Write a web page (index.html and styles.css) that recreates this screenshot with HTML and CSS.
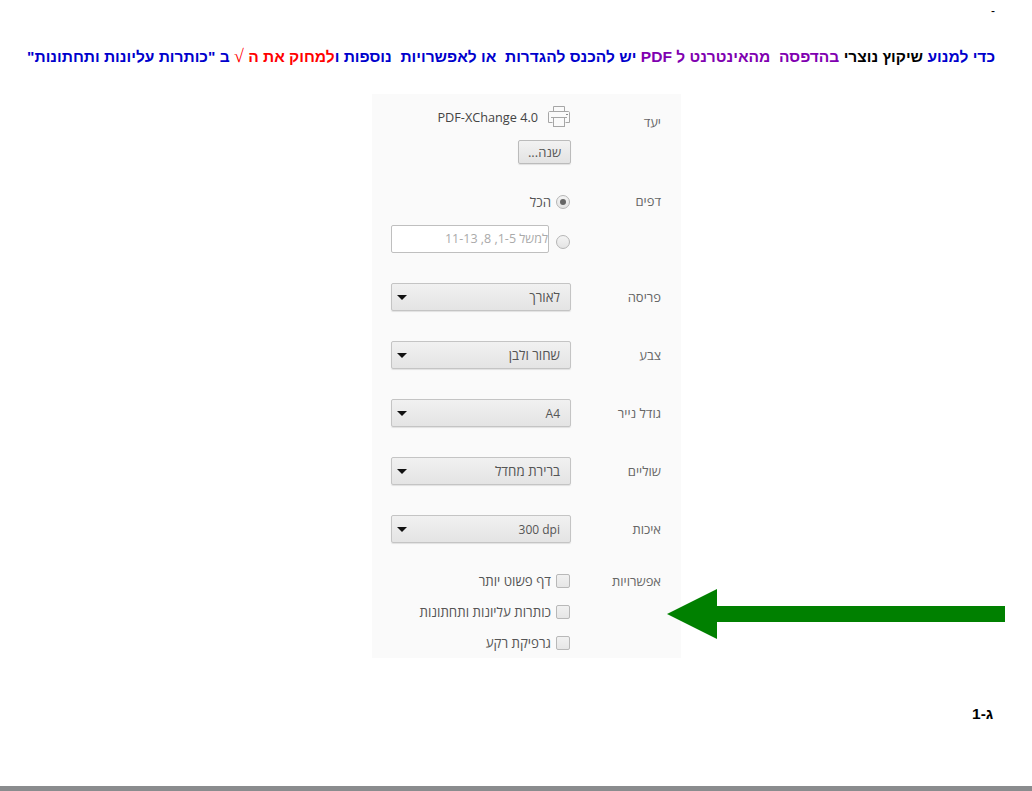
FILE: index.html
```html
<!DOCTYPE html>
<html lang="he" dir="rtl">
<head>
<meta charset="utf-8">
<title>הדפסה</title>
<link rel="stylesheet" href="styles.css">
</head>
<body>
<div class="page">
  <div class="dash">-</div>
  <h1 class="headline"><span class="blue">כדי למנוע</span> <span class="black">שיקוץ נוצרי</span> <span class="purple">בהדפסה&nbsp; מהאינטרנט ל PDF</span> <span class="blue">יש להכנס להגדרות&nbsp; או לאפשרויות&nbsp; נוספות ו</span><span class="red">למחוק את ה <span class="root">√</span></span> <span class="blue">ב "כותרות עליונות ותחתונות"</span></h1>
  <main class="panel">
    <section class="row row-dest">
      <div class="label label-dest">יעד</div>
      <div class="field">
        <div class="printer">
          <svg class="printer-icon" width="24" height="23" viewBox="0 0 24 23" fill="none" stroke="#a6a6a6" stroke-width="1">
            <path d="M6.5 6.5V1.5H17.5V6.5"/>
            <path d="M5.5 17.5H1.5V7.5C1.5 7 2 6.5 2.5 6.5H21.5C22 6.5 22.5 7 22.5 7.5V17.5H18.5"/>
            <rect x="6.5" y="12.5" width="11" height="9"/>
            <path d="M4 12.5H20"/>
            <path d="M19 9.5H21" stroke="#8a8a8a"/>
          </svg>
          <span class="latin">PDF-XChange 4.0</span>
        </div>
        <button class="btn" type="button">שנה...</button>
      </div>
    </section>
    <section class="row row-pages">
      <div class="label">דפים</div>
      <div class="field pages">
        <div class="opt"><span class="radio on"></span><span>הכל</span></div>
        <div class="opt opt-range"><span class="radio radio-low"></span><span class="range">למשל 1-5, 8, 11-13</span></div>
      </div>
    </section>
    <section class="row row-sel"><div class="label">פריסה</div><div class="field"><div class="select"><span>לאורך</span><span class="caret"></span></div></div></section>
    <section class="row row-sel"><div class="label">צבע</div><div class="field"><div class="select"><span>שחור ולבן</span><span class="caret"></span></div></div></section>
    <section class="row row-sel"><div class="label">גודל נייר</div><div class="field"><div class="select"><span class="latin">A4</span><span class="caret"></span></div></div></section>
    <section class="row row-sel"><div class="label">שוליים</div><div class="field"><div class="select"><span>ברירת מחדל</span><span class="caret"></span></div></div></section>
    <section class="row row-sel"><div class="label">איכות</div><div class="field"><div class="select"><span class="latin">300 dpi</span><span class="caret"></span></div></div></section>
    <section class="row row-opts">
      <div class="label">אפשרויות</div>
      <div class="field checks">
        <div class="opt"><span class="check"></span><span>דף פשוט יותר</span></div>
        <div class="opt"><span class="check"></span><span>כותרות עליונות ותחתונות</span></div>
        <div class="opt"><span class="check"></span><span>גרפיקת רקע</span></div>
      </div>
    </section>
  </main>
  <svg class="arrow" width="339" height="50" viewBox="0 0 339 50"><path d="M0 25L50 0V17H338V33H50V50Z" fill="#008000"/></svg>
  <div class="pageno">ג-1</div>
</div>
<div class="bottom"></div>
</body>
</html>
```
FILE: styles.css
```css
* { box-sizing: border-box; }
html, body { margin: 0; padding: 0; height: 100%; background: #fff; }
body { display: flex; flex-direction: column; height: 791px; overflow: hidden; }
.page { position: relative; flex: 1; padding: 0 37px 0 27px; font-family: "Open Sans", "Liberation Sans", sans-serif; }
.dash { height: 46px; padding: 1px 0 0 0; font: 12px/20px "Liberation Sans", sans-serif; color: #000; }
.headline { margin: 0; font: bold 15.55px/21px "Liberation Sans", sans-serif; white-space: nowrap; }
.blue { color: #0000cc; }
.black { color: #000; }
.purple { color: #8000b0; }
.red { color: #ff0000; }
.root { font-family: "Liberation Serif", serif; font-weight: normal; font-size: 18px; line-height: 16px; }
.panel { width: 309px; height: 564px; margin: 27px 314px 0 0; background: #fafafa; padding: 0 20px; font-size: 13.3px; color: #555; display: flex; flex-direction: column; }
.row { display: flex; }
.label { width: 90px; flex: none; font-size: 13px; color: #666; line-height: 18px; }
.field { flex: 1; display: flex; flex-direction: column; align-items: flex-start; }
.row-dest { height: 99px; padding-top: 10px; }
.label-dest { padding-top: 9px; }
.printer { display: flex; align-items: center; gap: 9px; height: 24px; color: #444; padding-top: 1px; }
.latin { direction: ltr; font-size: 12.7px; }
.btn { width: 53px; height: 24px; margin-top: 12px; padding: 0; border: 1px solid #bbb; border-radius: 2px; background: linear-gradient(#f2f2f2, #e3e3e3); font: 13px "Open Sans", "Liberation Sans", sans-serif; color: #555; box-shadow: 0 1px 1px rgba(0,0,0,.1); }
.row-pages { height: 90px; }
.row-pages .label { line-height: 16px; }
.pages { gap: 14px; }
.opt { display: flex; align-items: center; gap: 5px; height: 18px; }
.opt-range { height: 28px; gap: 7px; }
.radio { width: 14px; height: 14px; flex: none; margin-right: 1px; border: 1px solid #b5b5b5; border-radius: 50%; background: linear-gradient(#f4f4f4, #e4e4e4); display: flex; align-items: center; justify-content: center; }
.radio-low { margin-top: 5px; }
.radio.on::after { content: ""; width: 6px; height: 6px; border-radius: 50%; background: #666; }
.range { width: 158px; height: 28px; border: 1px solid #bfbfbf; border-radius: 2px; background: #fff; color: #aaa; font-size: 12.5px; line-height: 26px; padding: 0; white-space: nowrap; }
.row-sel { height: 58px; align-items: flex-start; }
.row-sel .label { line-height: 28px; }
.select { width: 180px; height: 28px; border: 1px solid #c4c4c4; border-radius: 2px; background: linear-gradient(#f1f1f1, #e4e4e4); box-shadow: 0 1px 1px rgba(0,0,0,.1); display: flex; align-items: center; justify-content: space-between; padding: 0 10px 0 5px; color: #555; }
.select .latin { font-size: 12px; }
.caret { width: 0; height: 0; border: 5px solid transparent; border-top: 5px solid #111; border-bottom: 0; }
.row-opts { height: 84px; }
.row-opts .label { line-height: 16px; }
.checks { gap: 15px; }
.checks .opt { height: 16px; }
.check { width: 14px; height: 14px; flex: none; margin-right: 1px; border: 1px solid #b8b8b8; border-radius: 2px; background: linear-gradient(#f1f1f1, #e6e6e6); }
.arrow { position: absolute; left: 667px; top: 589px; }
.pageno { position: absolute; left: 972px; top: 704px; font: bold 15.5px/20px "Liberation Sans", sans-serif; color: #000; }
.bottom { height: 5px; background: #8a8c8e; flex: none; }
```
